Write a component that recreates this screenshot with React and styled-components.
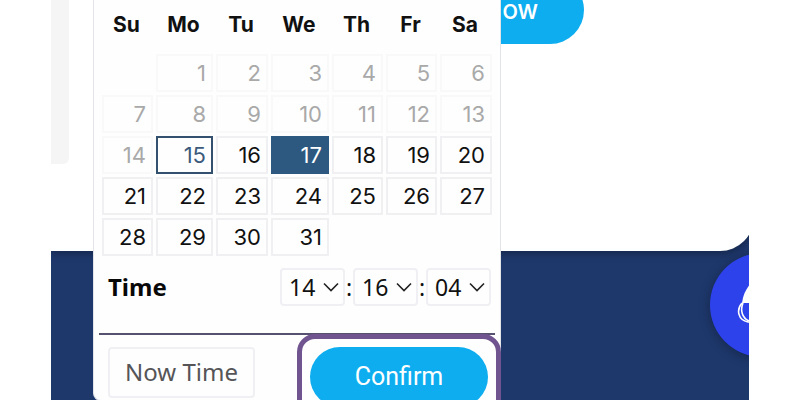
import { useState } from 'react'
import styled, { createGlobalStyle } from 'styled-components'

const GlobalStyle = createGlobalStyle`
  * {
    box-sizing: border-box;
  }
  body {
    margin: 0;
    background: #ffffff;
    font-family: "Noto Sans", "Liberation Sans", sans-serif;
  }
`

const Stage = styled.div`
  position: relative;
  height: 100vh;
  margin: 0 51px;
  overflow: hidden;
  background: #1e386c;
`

const Card = styled.section`
  display: flex;
  height: 251px;
  margin-right: -5px;
  background: #ffffff;
  border-bottom-right-radius: 34px;
  box-shadow: 0 2px 8px rgba(0, 0, 0, 0.35);
`

const SidePanel = styled.div`
  width: 18px;
  height: 164px;
  background: #f5f5f5;
  border-bottom-right-radius: 6px;
`

const BookButton = styled.button`
  width: 160px;
  height: 68px;
  margin: -24px 0 0 355px;
  padding: 3px 46px 0 0;
  border: none;
  border-radius: 34px;
  background: #0dadef;
  color: #ffffff;
  font: 600 20px/24px "Inter", sans-serif;
  text-align: right;
  white-space: nowrap;
`

const Picker = styled.div`
  position: absolute;
  top: 0;
  left: 42px;
  width: 408px;
  padding: 0 5px 2px;
  border: 1px solid #e3e4ea;
  border-top: none;
  border-radius: 0 0 8px 8px;
  background: #fefefe;
`

const Calendar = styled.table`
  width: 100%;
  table-layout: fixed;
  border-spacing: 3px;
`

const WeekDay = styled.th`
  width: ${props => props.$width}px;
  height: 48px;
  padding: 0 2px 5px 0;
  color: #111111;
  font: bold 21px/24px "Inter", sans-serif;
`

const DayCell = styled.td`
  height: 38px;
  padding: 0;
`

const Day = styled.button`
  display: block;
  width: 100%;
  height: 38px;
  padding: 0 5px 1px 0;
  border: 2px solid ${props => (props.disabled ? '#f9f9fa' : '#f0f0f3')};
  background: transparent;
  color: ${props => (props.disabled ? '#a9a9a9' : '#111111')};
  font: 22px/32px "Inter", sans-serif;
  text-align: right;

  ${props => props.$today && `
    border-color: #34506f;
    color: #3c5a7c;
  `}

  ${props => props.$selected && `
    border-color: #2d5880;
    background: #2d5880;
    color: #ffffff;
  `}
`

const TimeRow = styled.div`
  display: flex;
  align-items: center;
  justify-content: space-between;
  height: 76px;
  padding: 0 4px 19px 9px;
  border-bottom: 2px solid #55516f;
`

const TimeTitle = styled.span`
  color: #080808;
  font: bold 24px/32px "Noto Sans", sans-serif;
`

const TimeFields = styled.div`
  display: flex;
  align-items: center;
  color: #111111;
  font-size: 23px;
  line-height: 32px;
`

const Colon = styled.span`
  width: 8px;
  text-align: center;
`

const SelectBox = styled.label`
  display: grid;
  align-items: center;
  width: 65px;
  height: 38px;

  select, svg {
    grid-area: 1 / 1;
  }

  svg {
    justify-self: end;
    margin-right: 6px;
    pointer-events: none;
  }
`

const TimeSelect = styled.select`
  appearance: none;
  width: 100%;
  height: 38px;
  padding: 0 0 0 7px;
  border: 2px solid #f0f0f4;
  border-radius: 4px;
  background: transparent;
  color: #111111;
  font: 23px/32px "Noto Sans", sans-serif;
`

const Footer = styled.div`
  display: flex;
  align-items: flex-start;
  justify-content: space-between;
  padding-left: 9px;
`

const NowButton = styled.button`
  width: 147px;
  height: 51px;
  margin-top: 12px;
  padding: 0 0 2px;
  border: 2px solid #f0f0f4;
  border-radius: 4px;
  background: transparent;
  color: #555558;
  font: 24px/32px "Noto Sans", sans-serif;
`

const Highlight = styled.div`
  width: 204px;
  margin: -1px -6px -28px 0;
  padding: 8px;
  border: 5px solid #70548f;
  border-radius: 18px;
  background: #fefefe;
`

const ConfirmButton = styled.button`
  display: block;
  width: 100%;
  height: 60px;
  padding: 0;
  border: none;
  border-radius: 30px;
  background: #0dadef;
  color: #ffffff;
  font: 25px/32px "Roboto", sans-serif;
`

const ChatButton = styled.button`
  position: absolute;
  top: 253px;
  right: -65px;
  width: 104px;
  height: 104px;
  padding: 0;
  border: none;
  border-radius: 50%;
  background: #2d42ea;
  box-shadow: 0 2px 12px rgba(0, 0, 0, 0.3);

  svg {
    display: block;
  }
`

const weekDays = [
    { name: 'Su', width: 51 },
    { name: 'Mo', width: 57 },
    { name: 'Tu', width: 52 },
    { name: 'We', width: 58 },
    { name: 'Th', width: 51 },
    { name: 'Fr', width: 51 },
    { name: 'Sa', width: 52 },
]

const weeks = [
    [null, 1, 2, 3, 4, 5, 6],
    [7, 8, 9, 10, 11, 12, 13],
    [14, 15, 16, 17, 18, 19, 20],
    [21, 22, 23, 24, 25, 26, 27],
    [28, 29, 30, 31, null, null, null],
]

const today = 15

const range = (length) => Array.from({ length }, (_, i) => String(i).padStart(2, '0'))

const TimeField = ({ label, value, count, onChange }) => (
    <SelectBox>
        <TimeSelect aria-label={label} value={value} onChange={e => onChange(e.target.value)}>
            {range(count).map(option => <option key={option}>{option}</option>)}
        </TimeSelect>
        <svg width="16" height="10" viewBox="0 0 16 10" fill="none" stroke="#222222" strokeWidth="1.6">
            <path d="M1 1.5 8 8.5 15 1.5" />
        </svg>
    </SelectBox>
)

const App = () => {
    const [selected, setSelected] = useState(17)
    const [hour, setHour] = useState('14')
    const [minute, setMinute] = useState('16')
    const [second, setSecond] = useState('04')

    const setNow = () => {
        const [h, m, s] = new Date().toTimeString().slice(0, 8).split(':')
        setSelected(today)
        setHour(h)
        setMinute(m)
        setSecond(s)
    }

    return (
        <>
            <GlobalStyle />
            <Stage>
                <Card>
                    <SidePanel />
                    <BookButton type="button">OW</BookButton>
                </Card>

                <ChatButton type="button" aria-label="Chat">
                    <svg width="104" height="104" viewBox="0 0 104 104" fill="none">
                        <path d="M32 50C33 42 36 36 41 30H63C69 35 73 43 74 50Z" fill="#ffffff" />
                        <path d="M32 50C26 57 28 67 38 69H68C77 66 79 57 74 50" stroke="#ffffff" strokeWidth="1.6" />
                        <path d="M33 50C30 57 32 65 39 68" stroke="#ffffff" strokeWidth="1.6" />
                    </svg>
                </ChatButton>

                <Picker>
                    <Calendar>
                        <thead>
                            <tr>
                                {weekDays.map(day => (
                                    <WeekDay key={day.name} scope="col" $width={day.width}>{day.name}</WeekDay>
                                ))}
                            </tr>
                        </thead>
                        <tbody>
                            {weeks.map((week, row) => (
                                <tr key={row}>
                                    {week.map((day, col) => (
                                        <DayCell key={col}>
                                            {day && (
                                                <Day
                                                    type="button"
                                                    disabled={day < today}
                                                    $today={day === today}
                                                    $selected={day === selected}
                                                    onClick={() => setSelected(day)}
                                                >
                                                    {day}
                                                </Day>
                                            )}
                                        </DayCell>
                                    ))}
                                </tr>
                            ))}
                        </tbody>
                    </Calendar>

                    <TimeRow>
                        <TimeTitle>Time</TimeTitle>
                        <TimeFields>
                            <TimeField label="Hour" value={hour} count={24} onChange={setHour} />
                            <Colon>:</Colon>
                            <TimeField label="Minute" value={minute} count={60} onChange={setMinute} />
                            <Colon>:</Colon>
                            <TimeField label="Second" value={second} count={60} onChange={setSecond} />
                        </TimeFields>
                    </TimeRow>

                    <Footer>
                        <NowButton type="button" onClick={setNow}>Now Time</NowButton>
                        <Highlight>
                            <ConfirmButton type="button">Confirm</ConfirmButton>
                        </Highlight>
                    </Footer>
                </Picker>
            </Stage>
        </>
    )
}

export default App
